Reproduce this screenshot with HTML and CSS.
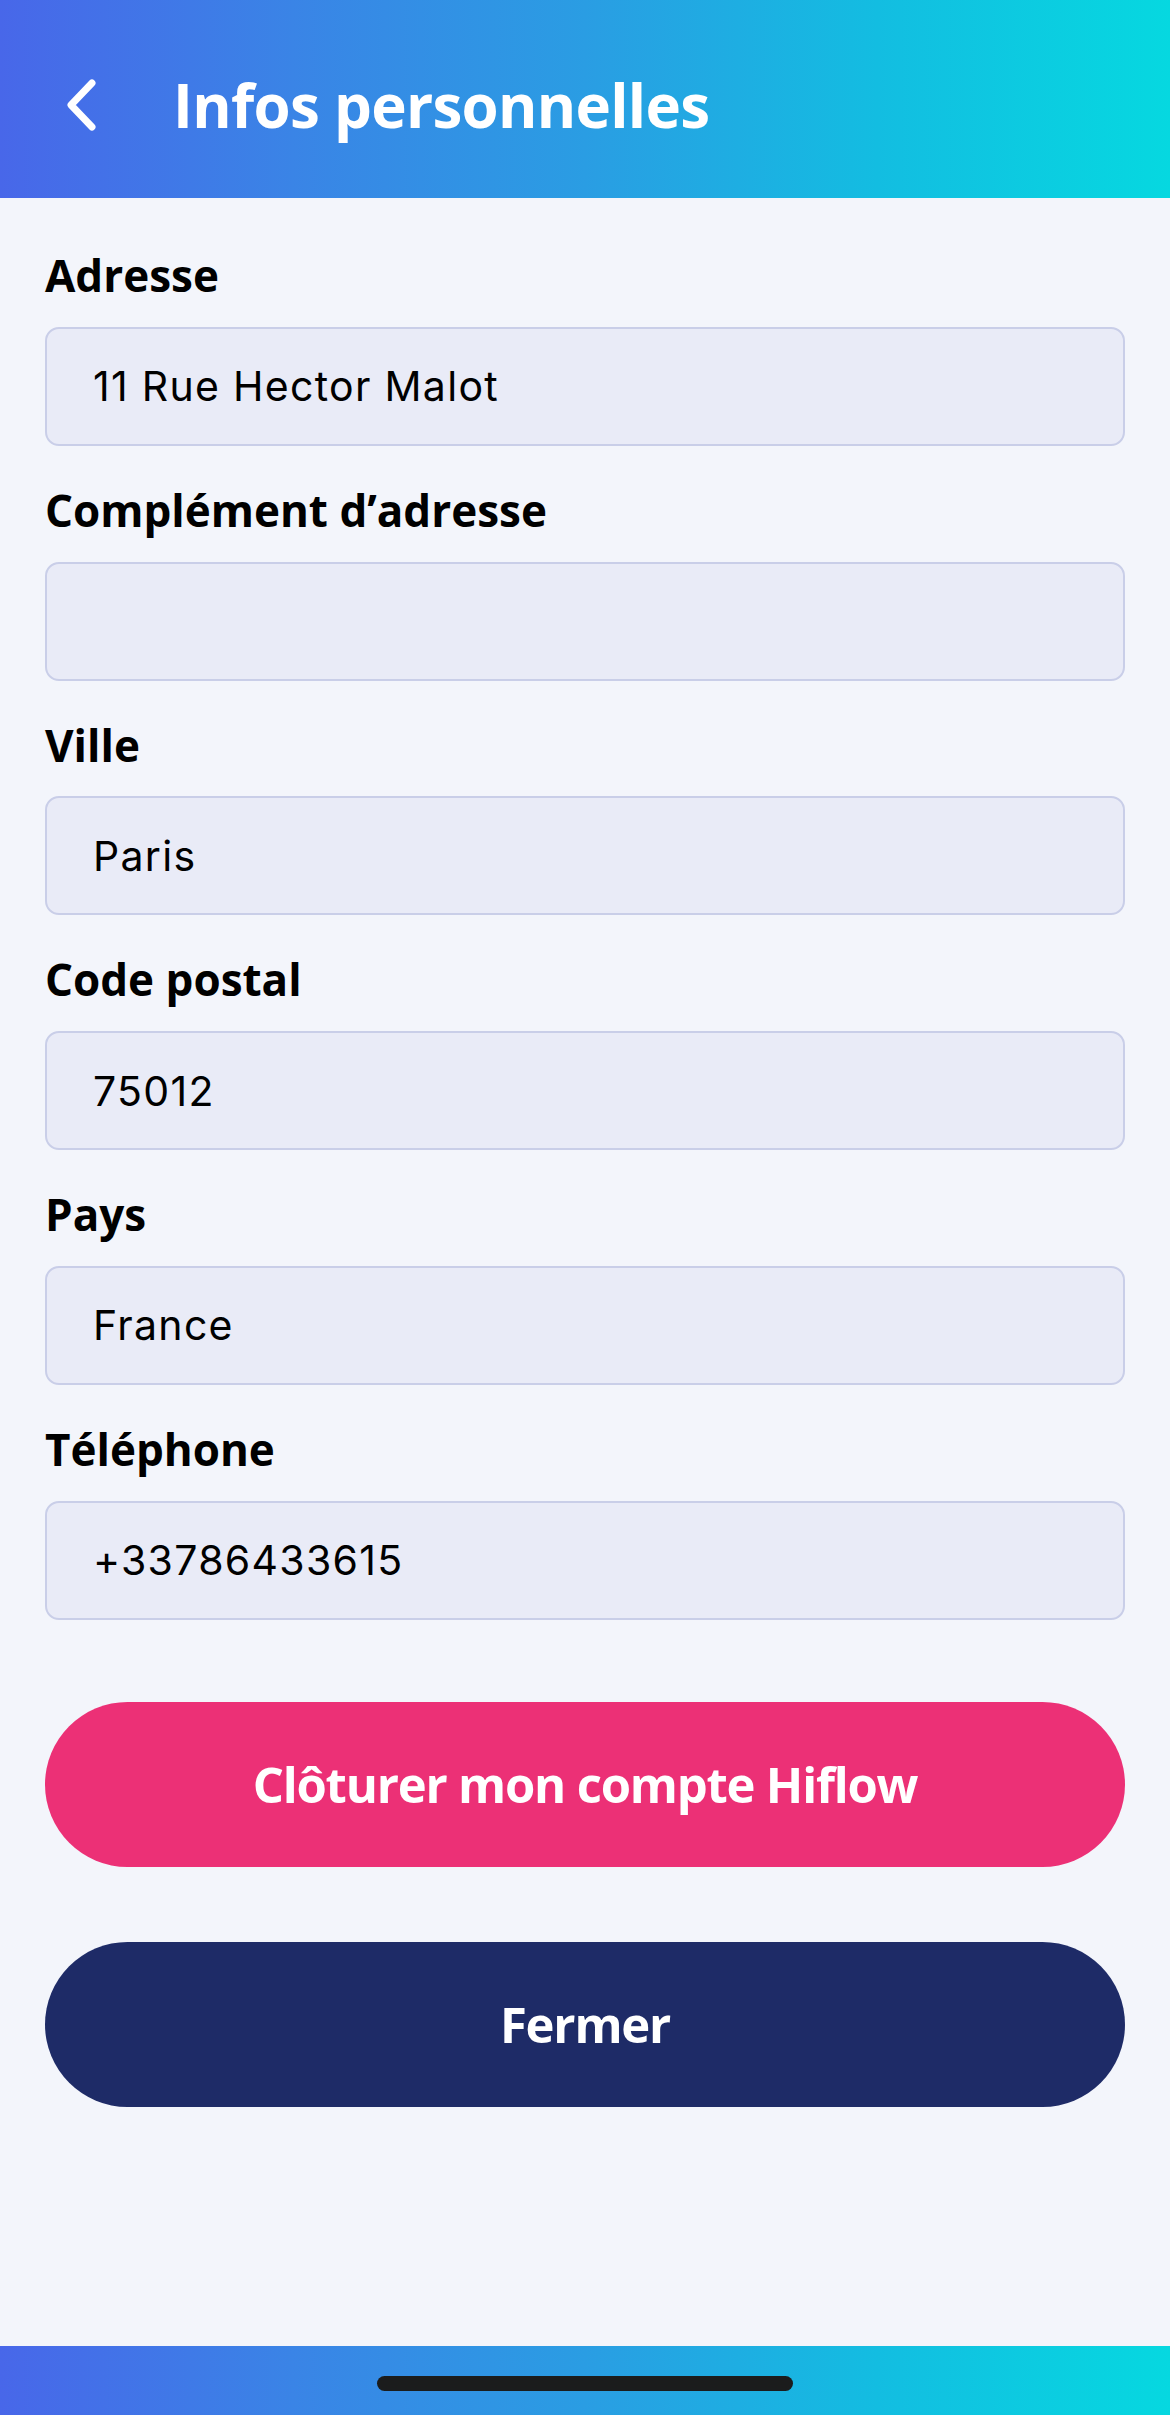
FILE: index.html
```html
<!DOCTYPE html>
<html lang="fr">
<head>
    <meta charset="UTF-8">
    <meta name="viewport" content="width=device-width, initial-scale=1.0">
    <title>Infos personnelles</title>
    <link rel="stylesheet" href="styles.css">
</head>
<body>
    <div class="screen">
        <header class="topbar">
            <button class="back" aria-label="Retour">
                <svg width="40" height="56" viewBox="0 0 40 56">
                    <path d="M32 6 L11 28 L32 50" fill="none" stroke="#fff" stroke-width="7" stroke-linecap="round" stroke-linejoin="round"/>
                </svg>
            </button>
            <h1>Infos personnelles</h1>
        </header>

        <main class="form">
            <div class="field">
                <label for="address">Adresse</label>
                <input type="text" id="address" value="11 Rue Hector Malot">
            </div>

            <div class="field">
                <label for="address2">Complément d’adresse</label>
                <input type="text" id="address2" value="">
            </div>

            <div class="field">
                <label for="city">Ville</label>
                <input type="text" id="city" value="Paris">
            </div>

            <div class="field">
                <label for="zip">Code postal</label>
                <input type="text" id="zip" value="75012">
            </div>

            <div class="field">
                <label for="country">Pays</label>
                <input type="text" id="country" value="France">
            </div>

            <div class="field">
                <label for="phone">Téléphone</label>
                <input type="tel" id="phone" value="+33786433615">
            </div>

            <div class="actions">
                <button class="btn btn-danger">Clôturer mon compte Hiflow</button>
                <button class="btn btn-primary">Fermer</button>
            </div>
        </main>

        <footer class="bottombar">
            <div class="home-indicator"></div>
        </footer>
    </div>
</body>
</html>
```

FILE: styles.css
```css
:root {
    --gradient: linear-gradient(90deg, #4867e9 0%, #3a84e6 25%, #2a9de3 50%, #13bde1 75%, #06d8e0 100%);
    --page-bg: #f3f5fb;
    --input-bg: #e9ebf7;
    --input-border: #c9cee8;
    --pink: #ec3076;
    --navy: #1e2b67;
    --title-font: 'Open Sans', 'Lato', sans-serif;
    --text-font: 'Inter', 'Liberation Sans', sans-serif;
}

* {
    box-sizing: border-box;
    margin: 0;
    padding: 0;
}

body {
    background: var(--page-bg);
    font-family: var(--text-font);
    color: #000;
}

.screen {
    min-height: 2415px;
    display: flex;
    flex-direction: column;
}

.topbar {
    height: 198px;
    background: var(--gradient);
    display: flex;
    align-items: center;
    padding: 12px 0 0 60px;
}

.back {
    background: none;
    border: none;
    width: 40px;
    height: 56px;
    display: flex;
    margin-right: 73px;
}

.topbar h1 {
    font-family: var(--title-font);
    font-weight: 700;
    font-size: 60px;
    line-height: 1.2;
    letter-spacing: -0.7px;
    color: #fff;
}

.form {
    flex: 1;
    padding: 0 45px;
    padding-top: 51px;
}

.field {
    margin-bottom: 38px;
}

.field label {
    display: block;
    font-family: var(--title-font);
    font-weight: 700;
    font-size: 44px;
    line-height: 1.2;
    margin-bottom: 25px;
}

.field input {
    width: 100%;
    height: 119px;
    background: var(--input-bg);
    border: 2px solid var(--input-border);
    border-radius: 14px;
    padding: 0 46px;
    font-family: var(--text-font);
    font-size: 41px;
    letter-spacing: 1.3px;
    color: #000;
    outline: none;
}

.actions {
    display: flex;
    flex-direction: column;
    gap: 75px;
    margin-top: 82px;
}

.btn {
    height: 165px;
    border: none;
    border-radius: 83px;
    font-family: var(--title-font);
    font-weight: 700;
    font-size: 49px;
    letter-spacing: -1.2px;
    color: #fff;
    cursor: pointer;
}

.btn-danger {
    background: var(--pink);
}

.btn-primary {
    background: var(--navy);
}

.bottombar {
    height: 69px;
    background: var(--gradient);
    display: flex;
    justify-content: center;
    padding-top: 30px;
}

.home-indicator {
    width: 416px;
    height: 15px;
    border-radius: 8px;
    background: #1b1c1c;
}
```
